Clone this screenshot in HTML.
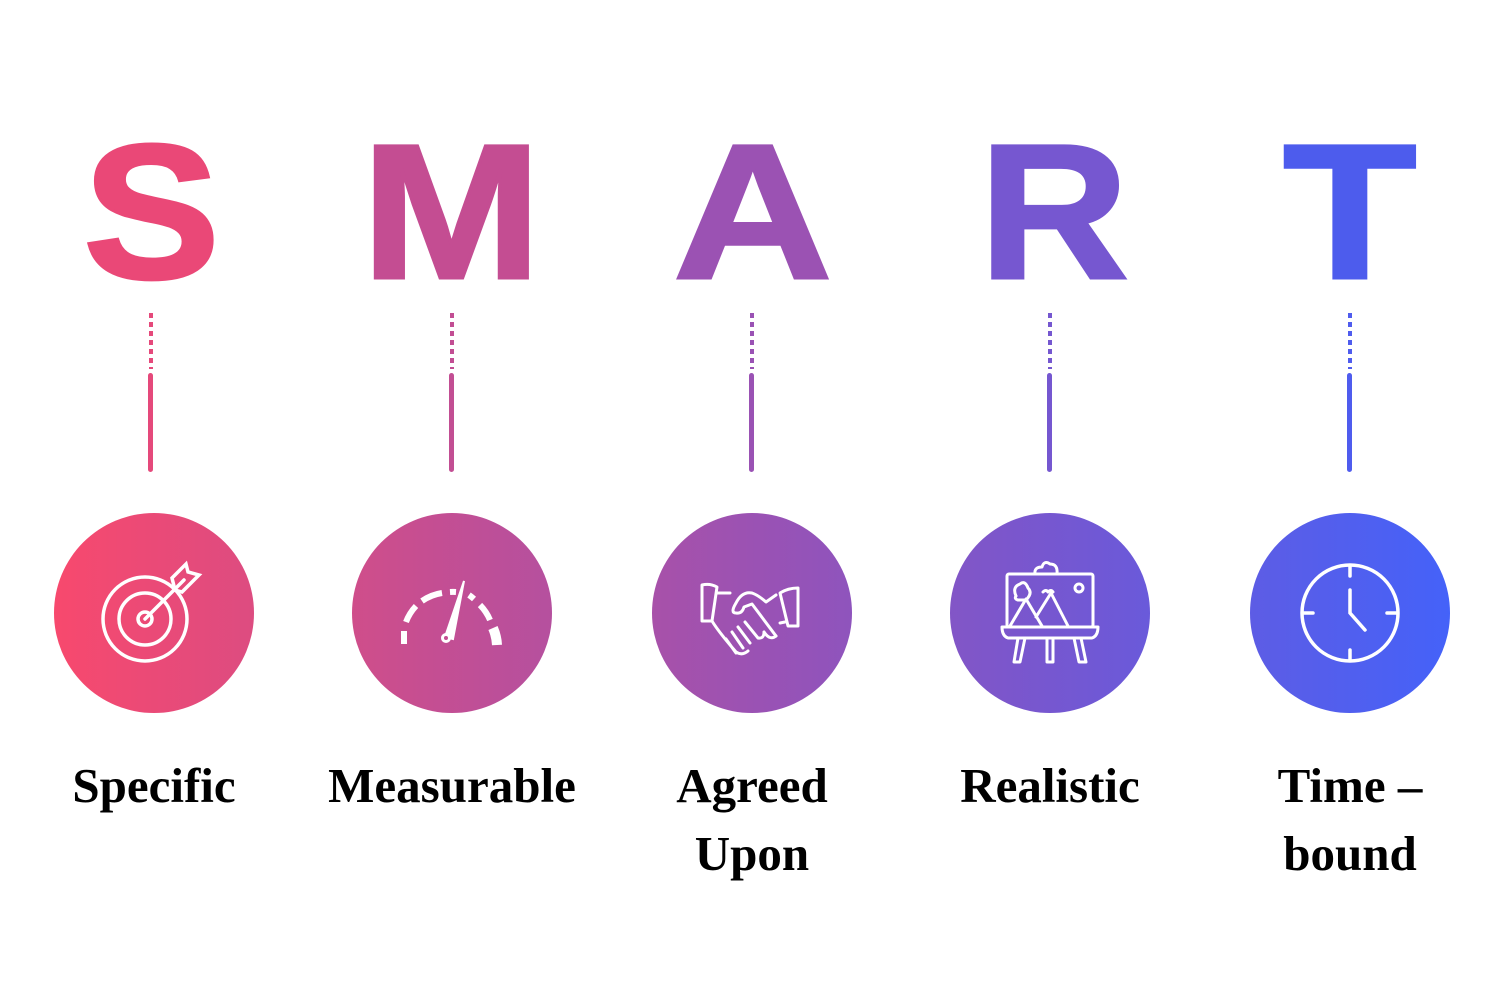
<!DOCTYPE html>
<html><head><style>
body{margin:0;width:1500px;height:1000px;background:#fff;position:relative;overflow:hidden;font-family:"Liberation Sans",sans-serif}
.g{background:linear-gradient(90deg,#ff4868 0px,#c94e8f 400px,#9b52b3 750px,#7657d0 1050px,#4362fa 1460px);background-size:1500px 100%;}
.L{position:absolute;top:116px;font-weight:900;font-size:192px;line-height:192px;color:#9b52b3;transform-origin:0 0;-webkit-text-stroke:3px currentColor}
.d{position:absolute;top:313px;width:4px;height:56px;background-image:repeating-linear-gradient(180deg,var(--c) 0 5px,transparent 5px 9px)}
.s{position:absolute;top:373px;width:5px;height:99px;border-radius:3px}
.c{position:absolute;top:513px;width:200px;height:200px;border-radius:50%}
.c svg{position:absolute;left:0;top:0}
.t{position:absolute;top:752px;width:300px;text-align:center;font-family:"Liberation Serif",serif;font-weight:bold;font-size:49px;line-height:68px;color:#000}
</style></head><body>
<div class="L" style="left:83px;color:#ea4877;transform:scaleX(1.07)">S</div>
<div class="L" style="left:361px;color:#c44d92;transform:scaleX(1.13)">M</div>
<div class="L" style="left:673px;color:#9b52b3;transform:scaleX(1.15)">A</div>
<div class="L" style="left:979px;color:#7657d0;transform:scaleX(1.08)">R</div>
<div class="L" style="left:1283px;color:#4d5ced;transform:scaleX(1.14)">T</div>

<div class="d" style="left:149px;--c:#e5497b"></div><div class="s" style="left:148px;background:#e5497b"></div>
<div class="d" style="left:450px;--c:#c24e93"></div><div class="s" style="left:449px;background:#c24e93"></div>
<div class="d" style="left:750px;--c:#9a52b4"></div><div class="s" style="left:749px;background:#9a52b4"></div>
<div class="d" style="left:1048px;--c:#7557d0"></div><div class="s" style="left:1047px;background:#7557d0"></div>
<div class="d" style="left:1348px;--c:#4f5cee"></div><div class="s" style="left:1347px;background:#4f5cee"></div>

<div class="c g" style="left:54px;background-position:-54px 0">
<svg width="200" height="200" fill="none" stroke="#fff" stroke-width="3.5" stroke-linecap="round">
<circle cx="91" cy="106" r="42"/><circle cx="91" cy="106" r="26"/><circle cx="91" cy="106" r="7"/>
<path d="M91 106 L130 67"/><path d="M118 65 L132 51 L134 59 L145 62 L128 79 L121 77 Z"/>
</svg></div>
<div class="c g" style="left:352px;background-position:-352px 0">
<svg width="200" height="200" fill="none" stroke="#fff" stroke-width="6">
<path d="M52 131 L52 118"/><path d="M54 109 A48 48 0 0 1 64 93"/><path d="M70 88 A48 48 0 0 1 90 80"/><path d="M98 79 A48 48 0 0 1 104 79"/>
<path d="M117 82 A48 48 0 0 1 122 86" /><path d="M128 92 A48 48 0 0 1 138 107"/><path d="M141 115 A48 48 0 0 1 145 132" stroke-width="10"/>
<path d="M93 124 L112 68 L101 126 Z" fill="#fff" stroke-width="2"/><circle cx="94" cy="125" r="5" fill="#fff" stroke="none"/><circle cx="94" cy="125" r="2" fill="#c44d92" stroke="none"/>
</svg></div>
<div class="c g" style="left:652px;background-position:-652px 0">
<svg width="200" height="200" fill="none" stroke="#fff" stroke-width="3" stroke-linejoin="round" stroke-linecap="round">
<path d="M50 72 L50 108 L60 108 L65 74 Q58 70 50 72 Z"/><path d="M146 75 L146 113 L136 113 L128 80 Q136 75 146 75 Z"/>
<path d="M65 80 L78 80 M124 82 L114 89 Q106 82 100 80 Q90 78 84 90 Q78 100 84 100 Q90 101 92 94 L100 91 L124 123"/>
<path d="M60 108 Q66 118 84 139 Q90 143 96 138 M74 126 L84 140 M80 119 L91 135 M86 114 L98 130 M93 109 L106 125 Q112 126 112 119 M124 123 Q118 128 112 119 M128 110 L133 109"/>
</svg></div>
<div class="c g" style="left:950px;background-position:-950px 0">
<svg width="200" height="200" fill="none" stroke="#fff" stroke-width="3" stroke-linejoin="round" stroke-linecap="round">
<rect x="57" y="61" width="86" height="53" rx="2"/>
<path d="M85 61 Q84 54 92 54 Q94 47 100 51 Q108 51 107 61"/>
<path d="M52 114 L148 114 Q148 123 142 125 L58 125 Q52 123 52 114 Z"/>
<path d="M68 125 L64 149 L70 149 L75 125 M97 125 L97 149 L103 149 L103 125 M124 125 L129 149 L136 149 L131 125"/>
<path d="M60 113 L76 86 L92 113 M86 104 L101 80 L118 113"/>
<circle cx="129" cy="75" r="4"/><path d="M66 83 Q62 74 70 71 Q75 67 78 75 Q83 80 76 87 L68 87 Q64 86 66 83"/>
<path d="M93 79 Q96 76 98 79 Q101 76 103 79"/>
</svg></div>
<div class="c g" style="left:1250px;background-position:-1250px 0">
<svg width="200" height="200" fill="none" stroke="#fff" stroke-width="3.5" stroke-linecap="round">
<circle cx="100" cy="100" r="48"/><path d="M100 53 L100 63 M100 137 L100 147 M53 100 L63 100 M137 100 L147 100"/>
<path d="M100 77 L100 100 L115 117"/>
</svg></div>

<div class="t" style="left:4px">Specific</div>
<div class="t" style="left:302px">Measurable</div>
<div class="t" style="left:602px">Agreed<br>Upon</div>
<div class="t" style="left:900px">Realistic</div>
<div class="t" style="left:1200px">Time –<br>bound</div>
</body></html>
